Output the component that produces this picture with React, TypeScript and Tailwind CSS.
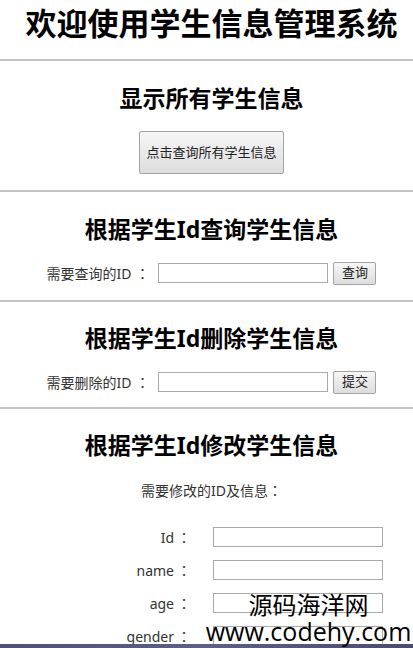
import React from 'react'

const font = "font-['Noto_Sans','Noto_Sans_CJK_SC',sans-serif]"

// centred full-width colon, as the reference font draws it
function Colon({ className = '' }: { className?: string }) {
  return (
    <span className={`inline-block w-[14px] text-center font-['Noto_Sans_CJK_JP',sans-serif] ${className}`}>：</span>
  )
}

function Rule() {
  return <div className="h-[2px] w-full bg-[#c4c4c4]" />
}

function Heading({ children, className = '' }: { children: React.ReactNode; className?: string }) {
  return (
    <h2 className={`text-center text-[23px] font-bold leading-[30px] text-black ${className}`}>{children}</h2>
  )
}

function GrayButton({ children, className = '' }: { children: React.ReactNode; className?: string }) {
  return (
    <button
      className={`rounded-[2px] border border-[#a3a3a3] bg-gradient-to-b from-[#f6f6f6] to-[#dddddd] text-[13px] text-[#222] ${className}`}
    >
      {children}
    </button>
  )
}

function IdRow({ label, action, className = '' }: { label: string; action: string; className?: string }) {
  return (
    <div className={`flex h-[24px] items-center justify-center pl-[10px] ${className}`}>
      <span className="text-[14px] text-[#333]">
        {label}
        <Colon className="ml-[4px]" />
      </span>
      <input className="ml-[9px] h-[20px] w-[170px] border border-[#a9a9a9] bg-white" />
      <GrayButton className="ml-[5px] h-[23px] w-[43px]">{action}</GrayButton>
    </div>
  )
}

const fields = ['Id', 'name', 'age', 'gender']

export default function App() {
  return (
    <div className={`relative h-[648px] overflow-hidden bg-white ${font}`}>
      <h1 className="flex h-[59px] items-start justify-center pl-[10px] pt-[4px] text-[31px] font-bold leading-[38px] text-black">
        欢迎使用学生信息管理系统
      </h1>
      <Rule />

      <section className="flex flex-col items-center pl-[10px]">
        <Heading className="mt-[22px]">显示所有学生信息</Heading>
        <GrayButton className="mt-[18px] mb-[16px] h-[43px] w-[145px]">点击查询所有学生信息</GrayButton>
      </section>
      <Rule />

      <section>
        <Heading className="mt-[22px] pl-[10px]">根据学生Id查询学生信息</Heading>
        <IdRow label="需要查询的ID" action="查询" className="mt-[17px] mb-[15px]" />
      </section>
      <Rule />

      <section>
        <Heading className="mt-[21px] pl-[10px]">根据学生Id删除学生信息</Heading>
        <IdRow label="需要删除的ID" action="提交" className="mt-[17px] mb-[13px]" />
      </section>
      <Rule />

      <section className="pl-[10px]">
        <Heading className="mt-[21px]">根据学生Id修改学生信息</Heading>
        <p className="mt-[20px] text-center text-[14px] leading-[20px] text-[#333]">
          需要修改的ID及信息
          <Colon />
        </p>
        <div className="mt-[24px] grid grid-cols-[181px_170px] gap-x-[22px] gap-y-[8px]">
          {fields.map((f) => (
            <React.Fragment key={f}>
              <span className="text-right text-[14px] leading-[24px] text-[#333]">
                {f}
                <Colon className="ml-[3px]" />
              </span>
              <input className="my-[2px] h-[20px] w-[170px] border border-[#a9a9a9] bg-white" />
            </React.Fragment>
          ))}
        </div>
      </section>

      <div className="absolute bottom-0 left-0 h-[4px] w-full bg-gradient-to-r from-[#4d5078] via-[#5c5f86] to-[#4a4d70]" />

      <div className="pointer-events-none absolute left-[206px] top-[591px] flex w-[205px] flex-col items-center text-black">
        <span className="text-[24px] leading-[28px]">源码海洋网</span>
        <span className="font-['Open_Sans',sans-serif] text-[25px] leading-[24px]">www.codehy.com</span>
      </div>
    </div>
  )
}
